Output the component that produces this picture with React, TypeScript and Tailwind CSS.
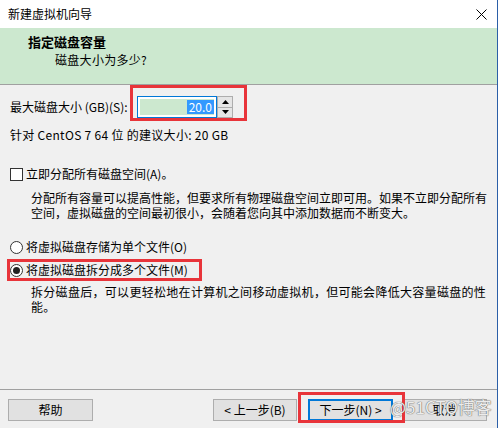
function Spin() {
  return (
    <div className="flex h-[22px] w-[16px] flex-col border border-[#adadad] bg-[#f0f0f0]">
      <div className="flex flex-1 items-center justify-center border-b border-[#adadad] bg-[#e5e5e5]">
        <svg width="7" height="4" viewBox="0 0 7 4">
          <path d="M0 4 L3.5 0 L7 4 Z" fill="#000" />
        </svg>
      </div>
      <div className="flex flex-1 items-center justify-center bg-[#e5e5e5]">
        <svg width="7" height="4" viewBox="0 0 7 4">
          <path d="M0 0 L7 0 L3.5 4 Z" fill="#000" />
        </svg>
      </div>
    </div>
  );
}

function Button({ label, className = "" }: { label: string; className?: string }) {
  return (
    <div
      className={`flex h-[22px] items-center justify-center border border-[#adadad] bg-[#e1e1e1] leading-[16px] ${className}`}
    >
      {label}
    </div>
  );
}

export default function App() {
  return (
    <div className="flex h-[428px] w-[498px] flex-col overflow-hidden border-r border-[#2b5fa8] bg-[#f0f0f0] font-['Noto_Sans_CJK_SC',sans-serif] text-[12px] leading-[16px] text-black">
      {/* title bar */}
      <div className="flex h-[28px] shrink-0 items-center justify-between bg-white pl-[8px] pr-[10px]">
        <span>新建虚拟机向导</span>
        <svg width="11" height="11" viewBox="0 0 11 11">
          <path d="M0.5 0.5 L10.5 10.5 M10.5 0.5 L0.5 10.5" stroke="#000" strokeWidth="1" />
        </svg>
      </div>

      {/* header */}
      <div className="h-[57px] shrink-0 border-b border-[#a0a0a0] bg-[#cce8cf] pl-[28px] pt-[6px]">
        <div className="text-[13px] font-bold">指定磁盘容量</div>
        <div className="ml-[27px] mt-[2px] tracking-[0.3px]">磁盘大小为多少?</div>
      </div>

      {/* content */}
      <div className="flex-1 pl-[10px]">
        <div className="mt-[11px] flex h-[22px] items-center">
          <span className="w-[127px] whitespace-nowrap">最大磁盘大小 (GB)(S):</span>
          <div className="relative flex">
            <div className="flex h-[22px] w-[80px] items-center justify-end border border-[#0078d7] bg-white p-[2px]">
              <div className="flex h-full flex-1 items-center justify-end bg-[#cce8cf]">
                <span className="flex h-[14px] items-center bg-[#3399ff] px-[2px] leading-[14px] text-white">20.0</span>
              </div>
            </div>
            <Spin />
            <div className="absolute left-[-7px] top-[-11px] h-[36px] w-[117px] border-[3px] border-[#e8343a]" />
          </div>
        </div>

        <div className="mt-[9px] whitespace-nowrap tracking-[0.3px]">针对 CentOS 7 64 位 的建议大小: 20 GB</div>

        <div className="mt-[23px] flex items-center">
          <div className="mr-[3px] h-[13px] w-[13px] border border-[#333] bg-white" />
          <span>立即分配所有磁盘空间(A)。</span>
        </div>

        <div className="mt-[8px] pl-[21px] leading-[15px]">
          <div className="whitespace-nowrap">分配所有容量可以提高性能，但要求所有物理磁盘空间立即可用。如果不立即分配所有</div>
          <div className="whitespace-nowrap">空间，虚拟磁盘的空间最初很小，会随着您向其中添加数据而不断变大。</div>
        </div>

        <div className="mt-[19px] flex items-center">
          <div className="mr-[3px] h-[13px] w-[13px] rounded-full border border-[#333] bg-white" />
          <span>将虚拟磁盘存储为单个文件(O)</span>
        </div>

        <div className="relative mt-[7px] flex items-center">
          <div className="mr-[3px] flex h-[13px] w-[13px] items-center justify-center rounded-full border border-[#333] bg-white">
            <div className="h-[7px] w-[7px] rounded-full bg-[#222]" />
          </div>
          <span>将虚拟磁盘拆分成多个文件(M)</span>
          <div className="absolute left-[-3px] top-[-3px] h-[22px] w-[195px] border-[3px] border-[#e8343a]" />
        </div>

        <div className="mt-[6px] pl-[21px] leading-[15px] tracking-[0.3px]">
          <div className="whitespace-nowrap">拆分磁盘后，可以更轻松地在计算机之间移动虚拟机，但可能会降低大容量磁盘的性</div>
          <div className="whitespace-nowrap">能。</div>
        </div>
      </div>

      {/* footer */}
      <div className="relative flex h-[39px] shrink-0 border-t border-[#a0a0a0] pl-[8px] pt-[9px]">
        <Button label="帮助" className="w-[85px]" />
        <Button label="< 上一步(B)" className="ml-[120px] w-[84px]" />
        <div className="relative ml-[11px]">
          <div className="flex h-[22px] w-[85px] items-center justify-center border-2 border-[#0078d7] bg-[#e1e1e1]">
            下一步(N) &gt;
          </div>
          <div className="absolute left-[-10px] top-[-7px] h-[31px] w-[107px] border-[3px] border-[#e8343a]" />
        </div>
        <Button label="取消" className="ml-[9px] w-[85px]" />
        <div className="absolute left-[390px] top-[6px] whitespace-nowrap text-[17px] leading-[22px] text-[#ececec] [text-shadow:0_0_1px_#666,0_0_1px_#666]">
          @51CTO博客
        </div>
      </div>
    </div>
  );
}
